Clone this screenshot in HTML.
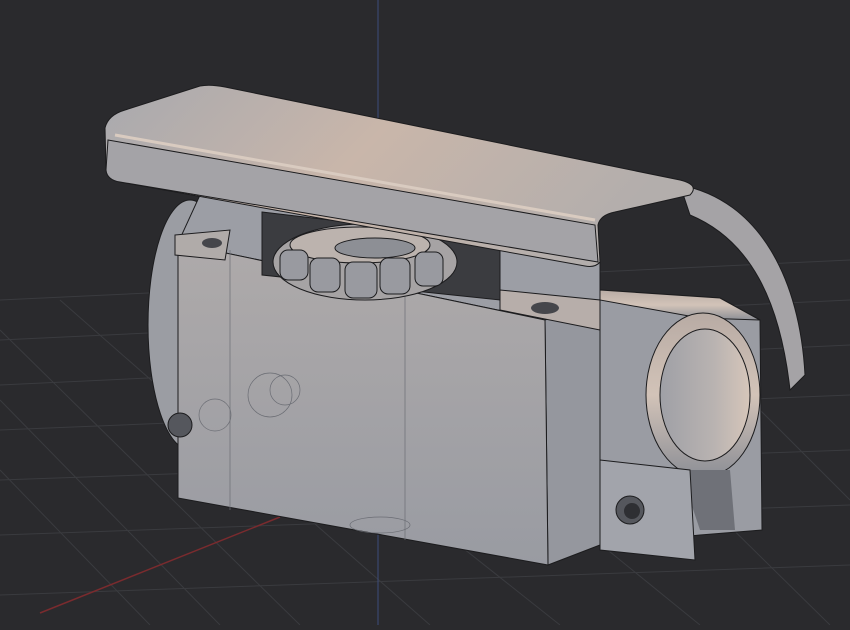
<!DOCTYPE html>
<html><head><style>html,body{margin:0;padding:0;background:#2a2a2d;overflow:hidden}</style></head>
<body>
<svg width="850" height="625" viewBox="0 0 850 625" xmlns="http://www.w3.org/2000/svg">
<defs>
<linearGradient id="top" x1="0" y1="0" x2="1" y2="0.3">
<stop offset="0" stop-color="#a8a9ae"/><stop offset="0.5" stop-color="#c9b6aa"/><stop offset="1" stop-color="#b3aeac"/></linearGradient>
<linearGradient id="front" x1="0" y1="0" x2="0" y2="1">
<stop offset="0" stop-color="#aeaaaa"/><stop offset="1" stop-color="#999ba2"/></linearGradient>
<linearGradient id="tube" x1="0" y1="0" x2="0" y2="1">
<stop offset="0" stop-color="#b8aba4"/><stop offset="0.5" stop-color="#d2c3b8"/><stop offset="1" stop-color="#8d8f96"/></linearGradient>
<linearGradient id="hole" x1="0" y1="0" x2="1" y2="0">
<stop offset="0" stop-color="#9fa0a6"/><stop offset="0.6" stop-color="#b9b3b1"/><stop offset="1" stop-color="#d6c6ba"/></linearGradient>
</defs>
<rect width="850" height="625" fill="#2a2a2d"/>
<g stroke="#3a3b3f" stroke-width="1">
<path d="M0 300 L850 260 M0 340 L850 300 M0 385 L850 345 M0 430 L850 395 M0 480 L850 450 M0 535 L850 505 M0 595 L850 565"/>
<path d="M0 330 L300 625 M0 400 L220 625 M60 300 L430 625 M150 300 L560 625 M300 300 L700 625 M500 300 L830 625 M650 300 L850 500 M0 470 L150 625"/>
</g>
<line x1="378" y1="0" x2="378" y2="625" stroke="#3c4c7a" stroke-width="1"/>
<line x1="40" y1="613" x2="280" y2="517" stroke="#7a2b2e" stroke-width="1.5"/>
<!-- arc handle -->
<path d="M680 185 C760 200 800 280 805 375 L790 390 C780 300 750 240 690 215 Z" fill="#a5a3a6" stroke="#1c1c1e"/>
<!-- left cylinder -->
<ellipse cx="190" cy="325" rx="42" ry="125" fill="#9b9da3" stroke="#1c1c1e"/>
<!-- body top behind bar -->
<polygon points="200,195 600,262 600,300 545,320 178,243" fill="#9c9ea5" stroke="#1c1c1e"/>
<!-- right tube block -->
<polygon points="600,290 720,298 760,320 762,530 700,535 600,545" fill="#9a9ca3" stroke="#1c1c1e"/>
<polygon points="600,290 720,298 760,320 700,318 600,300" fill="url(#tube)" stroke="#1c1c1e"/>
<ellipse cx="703" cy="395" rx="57" ry="82" fill="url(#tube)" stroke="#1c1c1e"/>
<ellipse cx="705" cy="395" rx="45" ry="66" fill="url(#hole)" stroke="#1c1c1e"/>
<polygon points="680,470 730,470 735,530 700,530" fill="#6f7178"/>
<polygon points="600,460 690,470 695,560 600,550" fill="#a2a4ab" stroke="#1c1c1e"/>
<circle cx="630" cy="510" r="14" fill="#55575d" stroke="#1c1c1e"/>
<circle cx="632" cy="511" r="8" fill="#2e2f33"/>
<!-- main body -->
<polygon points="545,320 600,300 600,545 548,565" fill="#95979e" stroke="#1c1c1e"/>
<polygon points="178,243 545,320 548,565 178,498" fill="url(#front)" stroke="#1c1c1e"/>
<polygon points="500,290 600,300 600,330 500,310" fill="#b7aeaa" stroke="#1c1c1e"/>
<ellipse cx="545" cy="308" rx="14" ry="6" fill="#45464b"/>
<polygon points="175,235 230,230 225,260 175,255" fill="#b0aba9" stroke="#1c1c1e"/>
<ellipse cx="212" cy="243" rx="10" ry="5" fill="#45464b"/>
<circle cx="180" cy="425" r="12" fill="#55575d" stroke="#1c1c1e"/>
<g fill="none" stroke="#6b6d74" stroke-width="0.7">
<circle cx="215" cy="415" r="16"/><circle cx="270" cy="395" r="22"/><circle cx="285" cy="390" r="15"/>
<line x1="230" y1="250" x2="230" y2="510"/><line x1="405" y1="290" x2="405" y2="540"/>
<ellipse cx="380" cy="525" rx="30" ry="8"/>
</g>
<!-- window + knob -->
<polygon points="262,212 500,240 500,300 262,275" fill="#3b3c40" stroke="#1c1c1e"/>
<ellipse cx="365" cy="262" rx="92" ry="38" fill="#a6a3a4" stroke="#1c1c1e"/>
<ellipse cx="360" cy="245" rx="70" ry="18" fill="#bcb3ae" stroke="#1c1c1e"/>
<ellipse cx="375" cy="248" rx="40" ry="10" fill="#8d8f95" stroke="#1c1c1e"/>
<g fill="#999aa0" stroke="#1c1c1e">
<rect x="280" y="250" width="28" height="30" rx="8"/><rect x="310" y="258" width="30" height="34" rx="8"/>
<rect x="345" y="262" width="32" height="36" rx="8"/><rect x="380" y="258" width="30" height="36" rx="8"/>
<rect x="415" y="252" width="28" height="34" rx="8"/>
</g>
<!-- top bar -->
<path d="M105 128 Q108 115 125 110 L200 86 Q210 84 225 87 L680 180 Q700 185 690 195 L615 212 Q600 215 598 225 L600 262 Q595 268 585 266 L120 182 Q107 180 106 170 Z" fill="url(#top)" stroke="#1c1c1e"/>
<path d="M108 140 L595 225 L598 262 L120 182 Q107 180 106 170 Z" fill="#a4a3a7" stroke="#1c1c1e"/>
<path d="M115 135 L595 220" stroke="#d9cbc0" stroke-width="3" fill="none"/>
</svg>
</body></html>
